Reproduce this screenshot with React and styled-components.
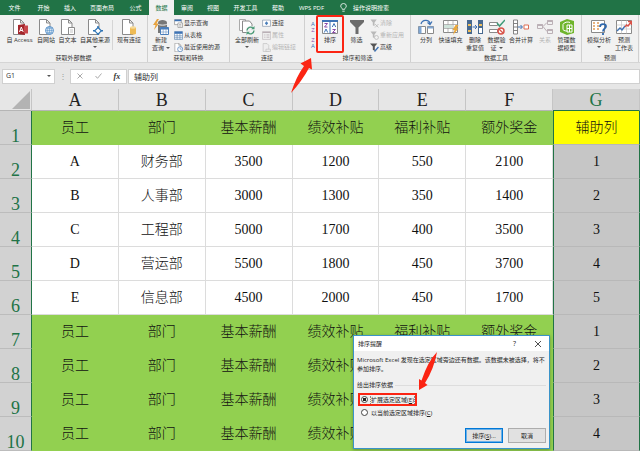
import { useState } from "react";
import styled, { createGlobalStyle } from "styled-components";

const tabs = [
  { name: "文件", width: 29 },
  { name: "开始", width: 29 },
  { name: "插入", width: 24 },
  { name: "页面布局", width: 40 },
  { name: "公式", width: 27 },
  { name: "数据", width: 25 },
  { name: "审阅", width: 26 },
  { name: "视图", width: 26 },
  { name: "开发工具", width: 39 },
  { name: "帮助", width: 26 },
  { name: "WPS PDF", width: 41 },
];

const columns = ["A", "B", "C", "D", "E", "F", "G"];
const titles = ["员工", "部门", "基本薪酬", "绩效补贴", "福利补贴", "额外奖金"];

const rows = [
  { head: true, cells: [...titles, "辅助列"] },
  { cells: ["A", "财务部", "3500", "1200", "550", "2100", "1"] },
  { cells: ["B", "人事部", "3000", "1300", "350", "1400", "2"] },
  { cells: ["C", "工程部", "5000", "1700", "400", "3500", "3"] },
  { cells: ["D", "营运部", "5500", "1800", "450", "3700", "4"] },
  { cells: ["E", "信息部", "4500", "2000", "450", "1700", "5"] },
  { head: true, cells: [...titles, "1"] },
  { head: true, cells: [...titles, "2"] },
  { head: true, cells: [...titles, "3"] },
  { head: true, cells: [...titles, "4"] },
];

const page = (
  <path d="M1.5 .5h7l3.500 3.500v11.500h-10.500zM8.500 .5v3.500h3.500" fill="#fff" stroke="#8a8a8a" />
);

const icons = {
  access: (
    <>
      {page}
      <path d="M6 6l7-1v11l-7-1z" fill="#a4262c" />
      <path d="M12 6.500h4v8h-4z" fill="#c8474c" />
      <path d="M7.500 13L9.300 8l1.900 5M8.200 11.500h2.300" fill="none" stroke="#fff" />
    </>
  ),
  web: (
    <>
      {page}
      <circle cx="11.500" cy="11.500" r="4" fill="#e4eff9" stroke="#5b93c9" />
      <path d="M7.500 11.500h8M11.500 7.500v8M8.500 9.300h6M8.500 13.700h6" stroke="#5b93c9" strokeWidth=".6" />
      <ellipse cx="11.500" cy="11.500" rx="2" ry="4" fill="none" stroke="#5b93c9" strokeWidth=".6" />
    </>
  ),
  text: (
    <>
      {page}
      <path d="M8.500 8.500h6v7h-6z" fill="#fff" stroke="#8a8a8a" />
      <path d="M10 11h3M10 13h3" stroke="#aaa" strokeWidth=".7" />
    </>
  ),
  other: (
    <>
      {page}
      <path d="M11 8.500l3.300 3.300-3.300 3.300-3.300-3.300z" fill="#fff" stroke="#2f75b5" strokeWidth="1.200" />
      <path d="M11 7v2M11 14.500v2M6 11.800h2M14 11.800h2" stroke="#2f75b5" strokeWidth="1.500" />
    </>
  ),
  database: (
    <>
      {page}
      <path d="M9 8.500v6.200c0 .9 6 .9 6 0V8.500z" fill="#eebb55" />
      <ellipse cx="12" cy="8.500" rx="3" ry="1.200" fill="#f8dc9a" />
    </>
  ),
  newQuery: (
    <>
      <path d="M4 0L0 6h2.500L1 11l5-6.500H3.500L6 0z" fill="#e8a33d" />
      <path d="M5 3.500C5 0 14 0 14 3.500V14H5z" fill="#777" />
      <path d="M5 5c1 1.500 8 1.500 9 0" fill="none" stroke="#f1f1f1" />
      <path d="M7.500 8.500h8v7h-8z" fill="#fff" stroke="#4a7ebb" />
      <path d="M7.500 8.500h8v2h-8z" fill="#4a7ebb" />
      <path d="M10.200 10v5M13 10v5M8 13h7" stroke="#6d94c4" strokeWidth=".6" />
    </>
  ),
  showQuery: (
    <>
      <path d="M1 1h12v9H1z" fill="#fff" stroke="#777" />
      <path d="M1 1h12v3H1z" fill="#3e73b5" />
      <path d="M7 7h8v8H7z" fill="#fff" stroke="#777" />
      <path d="M9 10h4M9 12.500h4" stroke="#777" />
    </>
  ),
  table: (
    <>
      <path d="M1 1h14v14H1z" fill="#fff" stroke="#4a76a8" />
      <path d="M1 1h14v4H1z" fill="#3e73b5" />
      <path d="M5.500 5v10M10.500 5v10M1 8.500h14M1 12h14" stroke="#4a76a8" />
    </>
  ),
  recent: (
    <>
      {page}
      <circle cx="11" cy="11" r="4.500" fill="#fff" stroke="#4a7ebb" strokeWidth="1.300" />
      <path d="M11 8v3h3" fill="none" stroke="#4a7ebb" />
    </>
  ),
  refresh: (
    <>
      <path d="M.5 .5h6v11h-6z" fill="#fff" stroke="#aaa" />
      <path d="M3.500 2h7l2.500 3v8.500H3.500z" fill="#fff" stroke="#8a8a8a" />
      <circle cx="11.500" cy="11.500" r="4.500" fill="#f1f1f1" />
      <path d="M8 11.500a3.500 3.500 0 0 1 6-2.300M15 11.500a3.500 3.500 0 0 1-6 2.300" fill="none" stroke="#4c9b78" strokeWidth="1.400" />
      <path d="M15.500 7v3.300h-3.300zM7.500 16v-3.300h3.300z" fill="#4c9b78" />
    </>
  ),
  link: (
    <>
      <path d="M1 2h14v11H1z" fill="#fff" stroke="#6d8199" />
      <path d="M8 4l3 3.500-3 3.500-3-3.500z" fill="#4a7ebb" />
    </>
  ),
  props: (
    <>
      <path d="M1 1h14v14H1z" fill="#eee" stroke="#b8aeb4" />
      <path d="M1 2.500h14" stroke="#b8aeb4" strokeWidth="2" />
      <path d="M4 7h2M8 7h5M4 11h2M8 11h5" stroke="#b8aeb4" strokeWidth="1.500" />
    </>
  ),
  editLink: (
    <>
      <path d="M2 1h7l3 3v11H2z" fill="#eee" stroke="#b8b8b8" />
      <path d="M7 11h8v4H7z" fill="#eee" stroke="#b8b8b8" />
    </>
  ),
  sort: (
    <>
      <path d="M.5 1.500h15v13H.5z" fill="#fff" stroke="#8a8a8a" />
      <path d="M0 1h16v2H0z" fill="#3e73b5" />
      <path d="M8 2v12.500" stroke="#3e73b5" />
      <path d="M2.500 4.500h3l-3 3.500h3M10.500 10.500h3l-3 3h3" fill="none" stroke="#8a4aa8" />
      <path d="M2.300 13.500L4 10l1.700 3.500M10.300 8L12 4.500 13.700 8" fill="none" stroke="#3e73b5" />
    </>
  ),
  filter: <path d="M1 1h14v2L9.500 8.500V15h-3V8.500L1 3z" fill="#6b6b6b" />,
  clear: (
    <>
      <path d="M1 1h11L8 6v7L5 11V6z" fill="#b9b9b9" />
      <path d="M9 9l6 6M15 9l-6 6" stroke="#b9b9b9" strokeWidth="1.500" />
    </>
  ),
  reapply: (
    <>
      <path d="M1 1h11L8 6v7L5 11V6z" fill="#b9b9b9" />
      <circle cx="11.500" cy="11.500" r="3.500" fill="#f1f1f1" stroke="#b9b9b9" strokeWidth="1.400" />
    </>
  ),
  advanced: (
    <>
      <path d="M0 1h13L8.500 6v8L5 12V6z" fill="#555" />
      <path d="M8 15l7-8" stroke="#3e73b5" strokeWidth="2.500" />
    </>
  ),
  split: (
    <>
      <path d="M.5 7.500h7v7h-7zM9.500 7.500h6v7h-6z" fill="#fff" stroke="#8a8a8a" />
      <path d="M9.500 7.500h6v2h-6zM.5 7.500h3v7h-3z" fill="#7fa6d3" />
      <path d="M3 5C4 .5 11 0 12 4.500M9.500 3.500L12 5.500l2-3" fill="none" stroke="#3e73b5" strokeWidth="1.300" />
    </>
  ),
  flash: (
    <>
      <path d="M.5 1.500h14v12H.5z" fill="#fff" stroke="#8a8a8a" />
      <path d="M.5 5.500h14M.5 9.500h14M5 1.500v12M10 1.500v12" stroke="#9a9a9a" strokeWidth=".7" />
      <path d="M1 6h9v3H1z" fill="#cfe3da" />
      <path d="M12.500 6L9.500 11h2l-1.500 5 5.500-6.500h-2L15.500 6z" fill="#eaa93d" />
    </>
  ),
  dedupe: (
    <>
      <path d="M0 1h5v14H0zM11 1h5v14h-5z" fill="#47698f" />
      <path d="M1 5h3v2H1zM1 11h3v2H1zM12 5h3v2h-3z" fill="#edbd5a" />
      <path d="M12 9h3v5h-3z" fill="#fff" />
      <path d="M5.500 8h4M8 6l2 2-2 2" fill="none" stroke="#3e73b5" />
    </>
  ),
  validate: (
    <>
      <path d="M.5 3.500h8v3h-8zM.5 10.500h8v3h-8z" fill="#fff" stroke="#8a8a8a" />
      <path d="M8 4l2.500 3L16 1" fill="none" stroke="#3e9b78" strokeWidth="1.500" />
      <circle cx="12" cy="12" r="3" fill="#fff" stroke="#d9534a" strokeWidth="1.500" />
      <path d="M10 10l4 4" stroke="#d9534a" strokeWidth="1.200" />
    </>
  ),
  merge: (
    <>
      <path d="M.5 1h4v14h-4zM.5 4.500h4M.5 8h4M.5 11.500h4" fill="#fff" stroke="#777" strokeWidth=".9" />
      <path d="M5 8h4M7.500 6l2 2-2 2" fill="none" stroke="#3e73b5" />
      <path d="M11 6h4.500v4H11z" fill="#fff" stroke="#dc6e55" />
    </>
  ),
  relation: (
    <>
      <path d="M.5 5.500h5v4h-5zM10.500 1.500h5v4h-5zM10.500 10.500h5v4h-5z" fill="#f1f1f1" stroke="#bbb0b6" />
      <path d="M.5 6h5M10.500 2h5M10.500 11h5" stroke="#bbb0b6" strokeWidth="2" />
      <path d="M6 7.500l4-4M6 7.500l4 5" stroke="#bbb0b6" />
    </>
  ),
  model: (
    <>
      <path d="M1 3l7-3 7 2v12l-7 2-7-3z" fill="#6fb52c" />
      <path d="M4 5.500c1-2.500 5-3 7-2M4 5.500v5c1 1.500 3 1.500 4.500 1.500M8 6h5v7H8zM8 9.500h5M10.500 6v7" fill="none" stroke="#fff" />
    </>
  ),
  whatIf: (
    <>
      <path d="M.5 1.500h13v12H.5z" fill="#fff" stroke="#8a8a8a" />
      <path d="M2 4h2M6 4h2M2 7h2M6 7h2M2 10h2M6 10h2" stroke="#e09a55" strokeWidth="1.500" />
      <path d="M9 8c0-4 6-3.500 6-.5 0 2-3 2.200-3 5M12 14v2" fill="none" stroke="#2f68ad" strokeWidth="1.800" />
    </>
  ),
  forecast: (
    <>
      <path d="M.5 1.500h15v13H.5z" fill="#fff" stroke="#8a8a8a" />
      <path d="M.5 6h15M.5 10h15M5.500 1.500v13M10.500 1.500v13" stroke="#c2c2c2" strokeWidth=".7" />
      <path d="M1 12l3-3 2 2 3-4" fill="none" stroke="#3e73b5" strokeWidth="1.400" />
      <path d="M9 8l1.500-2L12 7l3-4M12 2.500h3.500V6" fill="none" stroke="#d9534a" strokeWidth="1.400" />
    </>
  ),
};

function Icon({ name, size = 16 }) {
  return (
    <svg width={size} height={size} viewBox="0 0 16 16" aria-hidden="true">
      {icons[name]}
    </svg>
  );
}

function Tool({ icon, lines, width, arrow, disabled }) {
  return (
    <ToolButton $width={width} disabled={disabled}>
      <Icon name={icon} />
      <ToolText>
        {lines.map((line, i) => (
          <span key={line}>
            {line}
            {arrow === "inline" && i === lines.length - 1 && <Caret $gap />}
          </span>
        ))}
        {arrow === "below" && <Caret $below />}
      </ToolText>
    </ToolButton>
  );
}

function SmallTools({ items }) {
  return (
    <SmallList>
      {items.map(({ icon, text, disabled }) => (
        <SmallButton key={text} disabled={disabled}>
          <Icon name={icon} size={9} />
          {text}
        </SmallButton>
      ))}
    </SmallList>
  );
}

function Ribbon() {
  return (
    <RibbonBar>
      <Group $width={148}>
        <Tools $left={4}>
          <Tool icon="access" lines={["自 Access"]} width={31} />
          <Tool icon="web" lines={["自网站"]} width={22} />
          <Tool icon="text" lines={["自文本"]} width={21} />
          <Tool icon="other" lines={["自其他来源"]} width={34} arrow="below" />
          <Divider />
          <Tool icon="database" lines={["现有连接"]} width={32} />
        </Tools>
        <GroupName>获取外部数据</GroupName>
      </Group>
      <Group $width={82}>
        <Tools>
          <Tool icon="newQuery" lines={["新建", "查询"]} width={26} arrow="inline" />
          <SmallTools
            items={[
              { icon: "showQuery", text: "显示查询" },
              { icon: "table", text: "从表格" },
              { icon: "recent", text: "最近使用的源" },
            ]}
          />
        </Tools>
        <GroupName>获取和转换</GroupName>
      </Group>
      <Group $width={75}>
        <Tools $left={2}>
          <Tool icon="refresh" lines={["全部刷新"]} width={30} arrow="below" />
          <SmallTools
            items={[
              { icon: "link", text: "连接" },
              { icon: "props", text: "属性", disabled: true },
              { icon: "editLink", text: "编辑链接", disabled: true },
            ]}
          />
        </Tools>
        <GroupName>连接</GroupName>
      </Group>
      <Group $width={106}>
        <Tools $left={4}>
          <SortColumn>
            <SortButton aria-label="升序">
              <i>A</i>
              <b>Z</b>
            </SortButton>
            <SortButton aria-label="降序">
              <b>Z</b>
              <i>A</i>
            </SortButton>
          </SortColumn>
          <Highlight>
            <Tool icon="sort" lines={["排序"]} width={26} />
          </Highlight>
          <Tool icon="filter" lines={["筛选"]} width={27} />
          <SmallTools
            items={[
              { icon: "clear", text: "清除", disabled: true },
              { icon: "reapply", text: "重新应用", disabled: true },
              { icon: "advanced", text: "高级" },
            ]}
          />
        </Tools>
        <GroupName>排序和筛选</GroupName>
      </Group>
      <Group $width={171}>
        <Tools $left={4}>
          <Tool icon="split" lines={["分列"]} width={22} />
          <Tool icon="flash" lines={["快速填充"]} width={27} />
          <Tool icon="dedupe" lines={["删除", "重复值"]} width={22} />
          <Tool icon="validate" lines={["数据验", "证"]} width={21} arrow="inline" />
          <Tool icon="merge" lines={["合并计算"]} width={28} />
          <Tool icon="relation" lines={["关系"]} width={20} disabled />
          <Tool icon="model" lines={["管理数", "据模型"]} width={23} />
        </Tools>
        <GroupName>数据工具</GroupName>
      </Group>
      <Group $width={57}>
        <Tools $left={4}>
          <Tool icon="whatIf" lines={["模拟分析"]} width={26} arrow="below" />
          <Tool icon="forecast" lines={["预测", "工作表"]} width={24} />
        </Tools>
        <GroupName>预测</GroupName>
      </Group>
    </RibbonBar>
  );
}

function Sheet() {
  return (
    <Table>
      <colgroup>
        <RowHeadCol />
        {columns.map((c) => (
          <col key={c} />
        ))}
      </colgroup>
      <thead>
        <tr>
          <Corner>
            <svg width="18" height="18" viewBox="0 0 18 18" aria-hidden="true">
              <path d="M18 0v18H0z" fill="#b3b3b3" />
            </svg>
          </Corner>
          {columns.map((c) => (
            <ColumnHead key={c} $selected={c === "G"}>
              {c}
            </ColumnHead>
          ))}
        </tr>
      </thead>
      <tbody>
        {rows.map(({ head, cells }, r) => (
          <tr key={r}>
            <RowHead>{r + 1}</RowHead>
            {cells.map((text, c) =>
              c === 6 ? (
                <SelectedCell key={c} $active={r === 0}>
                  {text}
                </SelectedCell>
              ) : (
                <Cell key={c} $head={head}>
                  {text}
                </Cell>
              )
            )}
          </tr>
        ))}
      </tbody>
    </Table>
  );
}

function SortDialog() {
  const [range, setRange] = useState("expand");

  return (
    <Dialog role="dialog" aria-label="排序提醒">
      <DialogTitle>
        <span>排序提醒</span>
        <TitleButton>?</TitleButton>
        <TitleButton aria-label="关闭">
          <svg width="6" height="6" viewBox="0 0 6 6">
            <path d="M0 0l6 6M6 0L0 6" stroke="#222" strokeWidth=".8" />
          </svg>
        </TitleButton>
      </DialogTitle>
      <DialogBody>
        <p>Microsoft Excel 发现在选定区域旁边还有数据。该数据未被选择，将不参加排序。</p>
        <Legend>给出排序依据</Legend>
        <Option $marked>
          <input type="radio" name="range" checked={range === "expand"} onChange={() => setRange("expand")} />
          <span>
            扩展选定区域(<u>E</u>)
          </span>
        </Option>
        <Option>
          <input type="radio" name="range" checked={range === "current"} onChange={() => setRange("current")} />
          <span>
            以当前选定区域排序(<u>C</u>)
          </span>
        </Option>
        <Actions>
          <ActionButton $primary>
            排序(<u>S</u>)...
          </ActionButton>
          <ActionButton>取消</ActionButton>
        </Actions>
      </DialogBody>
      <DialogArrow width="10" height="40" viewBox="0 0 10 40" aria-hidden="true">
        <path d="M0 39V28l2.500 1.500Q9 10 18 1Q15 18 6 32l2.500 2z" fill="#fb2413" />
      </DialogArrow>
    </Dialog>
  );
}

function App() {
  return (
    <Window>
      <GlobalStyle />
      <TabBar>
        {tabs.map(({ name, width }) => (
          <Tab key={name} $width={width} $active={name === "数据"}>
            {name}
          </Tab>
        ))}
        <Tell>
          <svg width="7" height="9" viewBox="0 0 7 9" aria-hidden="true">
            <path d="M2.300 6.300C2.300 5 .7 4.700 .7 3a2.800 2.500 0 0 1 5.600 0c0 1.700-1.600 2-1.600 3.300zM2.300 8.200h2.400" fill="none" stroke="#fff" strokeWidth=".8" />
          </svg>
          操作说明搜索
        </Tell>
      </TabBar>
      <Ribbon />
      <FormulaBar>
        <NameBox>
          <input aria-label="名称框" defaultValue="G1" />
          <Caret />
        </NameBox>
        <Dots>⋮</Dots>
        <FormulaTools>
          <button aria-label="取消">
            <svg width="6" height="6" viewBox="0 0 6 6">
              <path d="M.5 .5l5 5M5.500 .5l-5 5" stroke="#aaa" />
            </svg>
          </button>
          <button aria-label="输入">
            <svg width="7" height="6" viewBox="0 0 7 6">
              <path d="M.5 3l2 2.300L6.500 .5" fill="none" stroke="#aaa" />
            </svg>
          </button>
          <button>
            <em>fx</em>
          </button>
        </FormulaTools>
        <FormulaInput aria-label="编辑栏" defaultValue="辅助列" />
      </FormulaBar>
      <Sheet />
      <SortDialog />
      <RibbonArrow width="24" height="38" viewBox="0 0 24 38" aria-hidden="true">
        <path d="M2 36Q7 20 15 9l-3.500-2.500L22 1l1 11.500-3-1.500Q13 24 2 36z" fill="#fb2413" />
      </RibbonArrow>
    </Window>
  );
}

const GlobalStyle = createGlobalStyle`
  * {
    box-sizing: border-box;
  }
  body {
    margin: 0;
    font: 6px/8px "Open Sans", "Noto Sans CJK SC", sans-serif;
    color: #333;
  }
  button, input {
    font: inherit;
    color: inherit;
    padding: 0;
    margin: 0;
    border: none;
    background: none;
  }
  p {
    margin: 0;
  }
  svg {
    display: block;
    flex: none;
  }
`;

const Window = styled.div`
  position: relative;
  min-height: 100vh;
  overflow: hidden;
  background: #e6e6e6;
`;

const TabBar = styled.nav`
  display: flex;
  height: 15px;
  background: #217346;
  color: #fff;
`;

const Tab = styled.button`
  width: ${({ $width }) => $width}px;
  background: ${({ $active }) => ($active ? "#f1f1f1" : "none")};
  color: ${({ $active }) => ($active ? "#217346" : "#fff")};
  white-space: nowrap;
`;

const Tell = styled.button`
  display: flex;
  align-items: center;
  gap: 6px;
  padding-left: 8px;
`;

const RibbonBar = styled.section`
  display: flex;
  height: 48px;
  background: #f1f1f1;
  border-bottom: 1px solid #d5d5d5;
`;

const Group = styled.div`
  display: flex;
  flex-direction: column;
  width: ${({ $width }) => $width}px;
  padding-top: 1px;
  border-right: 1px solid #d0d0d0;
`;

const Tools = styled.div`
  display: flex;
  height: 38px;
  padding-left: ${({ $left }) => $left || 0}px;
`;

const GroupName = styled.div`
  text-align: center;
  line-height: 8px;
`;

const Divider = styled.div`
  width: 1px;
  margin: 4px 0;
  background: #d5d5d5;
`;

const ToolButton = styled.button`
  display: flex;
  flex-direction: column;
  align-items: center;
  flex: none;
  gap: 1px;
  width: ${({ $width }) => $width}px;
  padding-top: 3px;
  white-space: nowrap;
  color: ${({ disabled }) => (disabled ? "#b5b5b5" : "#333")};
`;

const ToolText = styled.span`
  display: flex;
  flex-direction: column;
  align-items: center;
  line-height: 8px;
`;

const Caret = styled.span`
  display: inline-block;
  border: 1px solid transparent;
  border-width: 2px 2px 0;
  border-top-color: #555;
  vertical-align: middle;
  margin-left: ${({ $gap }) => ($gap ? 2 : 0)}px;
  margin-top: ${({ $below }) => ($below ? 2 : 0)}px;
`;

const SmallList = styled.div`
  display: flex;
  flex-direction: column;
  padding-top: 1px;
`;

const SmallButton = styled.button`
  display: flex;
  align-items: center;
  gap: 1px;
  height: 12px;
  white-space: nowrap;
  color: ${({ disabled }) => (disabled ? "#b5b5b5" : "#333")};
`;

const SortColumn = styled.div`
  display: flex;
  flex-direction: column;
  gap: 4px;
  width: 8px;
  padding-top: 5px;
`;

const SortButton = styled.button`
  display: flex;
  flex-direction: column;
  line-height: 6px;
  i {
    color: #3e73b5;
    font-style: normal;
  }
  b {
    color: #8a4aa8;
    font-weight: normal;
  }
`;

const Highlight = styled.div`
  height: 36px;
  border-radius: 1px;
  outline: 2px solid #fb2413;
  outline-offset: -1px;
`;

const FormulaBar = styled.div`
  display: flex;
  align-items: center;
  height: 26px;
  padding: 0 0 0 2px;
`;

const NameBox = styled.div`
  display: flex;
  align-items: center;
  width: 53px;
  height: 15px;
  padding: 0 3px;
  background: #fff;
  border: 1px solid #d0d0d0;
  input {
    flex: 1;
    min-width: 0;
    font-size: 7px;
  }
`;

const Dots = styled.span`
  width: 15px;
  text-align: center;
  font-size: 8px;
  color: #999;
`;

const FormulaTools = styled.div`
  display: flex;
  width: 57px;
  height: 15px;
  background: #fff;
  border: 1px solid #d0d0d0;
  button {
    display: flex;
    flex: 1;
    align-items: center;
    justify-content: center;
  }
  em {
    font: italic bold 8px "Liberation Serif", serif;
  }
`;

const FormulaInput = styled.input`
  flex: 1;
  min-width: 0;
  height: 15px;
  margin-left: 1px;
  padding-left: 5px;
  background: #fff;
  border: 1px solid #d0d0d0;
  font-size: 8px;
`;

const Table = styled.table`
  width: 100%;
  table-layout: fixed;
  border-spacing: 0;
  font: 14px/16px "Liberation Serif", "Noto Sans CJK SC", serif;
  text-align: center;
  th,
  td {
    padding: 0;
    font-weight: 300;
  }
`;

const RowHeadCol = styled.col`
  width: 32px;
`;

const Corner = styled.td`
  height: 22px;
  border-right: 1px solid #c5c5c5;
  border-bottom: 1px solid #b5b5b5;
  svg {
    margin-left: 12px;
  }
`;

const ColumnHead = styled.th`
  height: 22px;
  background: ${({ $selected }) => ($selected ? "#d2d2d2" : "#e6e6e6")};
  color: ${({ $selected }) => ($selected ? "#217346" : "#222")};
  border-right: 1px solid #c5c5c5;
  border-bottom: 1px solid ${({ $selected }) => ($selected ? "#217346" : "#b5b5b5")};
  font-size: 18px;
  line-height: 20px;
`;

const RowHead = styled.th`
  height: 34px;
  background: #d2d2d2;
  color: #217346;
  border-right: 1px solid #217346;
  border-bottom: 1px solid #bcbcbc;
  font-size: 18px;
  line-height: 16px;
  vertical-align: bottom;
`;

const Cell = styled.td`
  height: 34px;
  color: #111;
  background: ${({ $head }) => ($head ? "#92d050" : "#fff")};
  border: solid ${({ $head }) => ($head ? "#92d050" : "#dcdcdc")};
  border-width: 0 1px 1px 0;
`;

const SelectedCell = styled.td`
  height: 34px;
  color: #111;
  background: ${({ $active }) => ($active ? "#ff0" : "#c6c6c6")};
  border: solid #217346;
  border-width: 0 1px 1px;
  border-bottom-color: #b8b8b8;
`;

const Dialog = styled.div`
  position: absolute;
  top: 335px;
  left: 353px;
  width: 197px;
  background: #f0f0f0;
  border: 1px solid #3a93c9;
  box-shadow: 0 1px 3px rgba(0, 0, 0, 0.3);
  color: #222;
`;

const DialogTitle = styled.div`
  display: flex;
  align-items: center;
  height: 15px;
  padding-left: 4px;
  background: #fff;
  span {
    flex: 1;
  }
`;

const TitleButton = styled.button`
  display: flex;
  align-items: center;
  justify-content: center;
  width: 23px;
  font-size: 7px;
`;

const DialogBody = styled.div`
  padding: 5px 3px;
  p {
    line-height: 9px;
  }
`;

const Legend = styled.div`
  display: flex;
  align-items: center;
  gap: 2px;
  margin: 7px 0 4px;
  &::after {
    content: "";
    flex: 1;
    border-top: 1px solid #ddd;
  }
`;

const Option = styled.label`
  display: flex;
  align-items: center;
  gap: 2px;
  width: fit-content;
  height: 13px;
  margin-left: 1px;
  padding: 0 1px 0 2px;
  border: 1px solid ${({ $marked }) => ($marked ? "#fb2413" : "transparent")};
  outline: 1px solid ${({ $marked }) => ($marked ? "#fb2413" : "transparent")};
  outline-offset: -2px;
  span {
    border-right: 1px dotted ${({ $marked }) => ($marked ? "#888" : "transparent")};
    border-left: 1px dotted ${({ $marked }) => ($marked ? "#888" : "transparent")};
  }
  input {
    appearance: none;
    width: 7px;
    height: 7px;
    border: 1px solid #444;
    border-radius: 50%;
    background: #fff;
  }
  input:checked {
    background: radial-gradient(#222 40%, #fff 50%);
  }
`;

const Actions = styled.div`
  display: flex;
  justify-content: flex-end;
  gap: 5px;
  margin-top: 9px;
`;

const ActionButton = styled.button`
  width: 38px;
  height: 15px;
  background: #e1e1e1;
  border: 1px solid #adadad;
  ${({ $primary }) => $primary && "border-color: #0078d7; outline: 1px solid #6cb0e6; outline-offset: -2px;"}
`;

const DialogArrow = styled.svg`
  position: absolute;
  top: 15px;
  left: 65px;
  overflow: visible;
`;

const RibbonArrow = styled.svg`
  position: absolute;
  top: 57px;
  left: 289px;
`;

export default App;
